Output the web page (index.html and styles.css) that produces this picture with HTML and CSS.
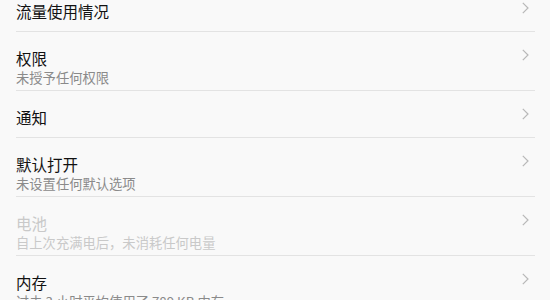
FILE: index.html
```html
<!doctype html>
<html lang="zh-CN">
	<head>
		<meta charset="utf-8">
		<title>应用信息</title>
		<link rel="stylesheet" href="styles.css">
	</head>
	<body>
		<div class="list">
			<div class="item">
				<div class="text">
					<div class="title">流量使用情况</div>
				</div>
				<span class="chevron"><svg width="7" height="12" viewBox="0 0 7 12"><path d="M0.8 0.8 L6 6 L0.8 11.2" /></svg></span>
			</div>
			<div class="item">
				<div class="text">
					<div class="title">权限</div>
					<div class="sub">未授予任何权限</div>
				</div>
				<span class="chevron"><svg width="7" height="12" viewBox="0 0 7 12"><path d="M0.8 0.8 L6 6 L0.8 11.2" /></svg></span>
			</div>
			<div class="item">
				<div class="text">
					<div class="title">通知</div>
				</div>
				<span class="chevron"><svg width="7" height="12" viewBox="0 0 7 12"><path d="M0.8 0.8 L6 6 L0.8 11.2" /></svg></span>
			</div>
			<div class="item">
				<div class="text">
					<div class="title">默认打开</div>
					<div class="sub">未设置任何默认选项</div>
				</div>
				<span class="chevron"><svg width="7" height="12" viewBox="0 0 7 12"><path d="M0.8 0.8 L6 6 L0.8 11.2" /></svg></span>
			</div>
			<div class="item disabled">
				<div class="text">
					<div class="title">电池</div>
					<div class="sub">自上次充满电后，未消耗任何电量</div>
				</div>
				<span class="chevron"><svg width="7" height="12" viewBox="0 0 7 12"><path d="M0.8 0.8 L6 6 L0.8 11.2" /></svg></span>
			</div>
			<div class="item">
				<div class="text">
					<div class="title">内存</div>
					<div class="sub">过去 3 小时平均使用了 789 KB 内存</div>
				</div>
				<span class="chevron"><svg width="7" height="12" viewBox="0 0 7 12"><path d="M0.8 0.8 L6 6 L0.8 11.2" /></svg></span>
			</div>
		</div>
	</body>
</html>
```

FILE: styles.css
```css
html, body {
	margin: 0;
	padding: 0;
	background-color: #f9f9f9;
	font-family: "Noto Sans CJK SC", "Noto Sans", sans-serif;
	overflow: hidden;
}
/* the list is scrolled a little, the first row is cut at the top */
.list {
	margin-top: -15px;
}
.item {
	display: flex;
	margin: 0 15px 0 16px;
	padding: 16px 0 10px 0;
	border-bottom: 1px solid #e3e3e3;
}
.text {
	flex: 1;
}
.title {
	font-size: 15.5px;
	line-height: 20px;
	color: #111;
}
.sub {
	font-size: 13.3px;
	line-height: 18px;
	padding-top: 1px;
	margin-bottom: -7px;
	color: #8a8a8a;
}
.disabled .title,
.disabled .sub {
	color: #c9c9c9;
}
.chevron {
	display: flex;
	align-items: center;
	height: 20px;
	margin-right: 6px;
	margin-top: -3px;
}
.chevron path {
	fill: none;
	stroke: #b8b8b8;
	stroke-width: 1.2;
}
```
